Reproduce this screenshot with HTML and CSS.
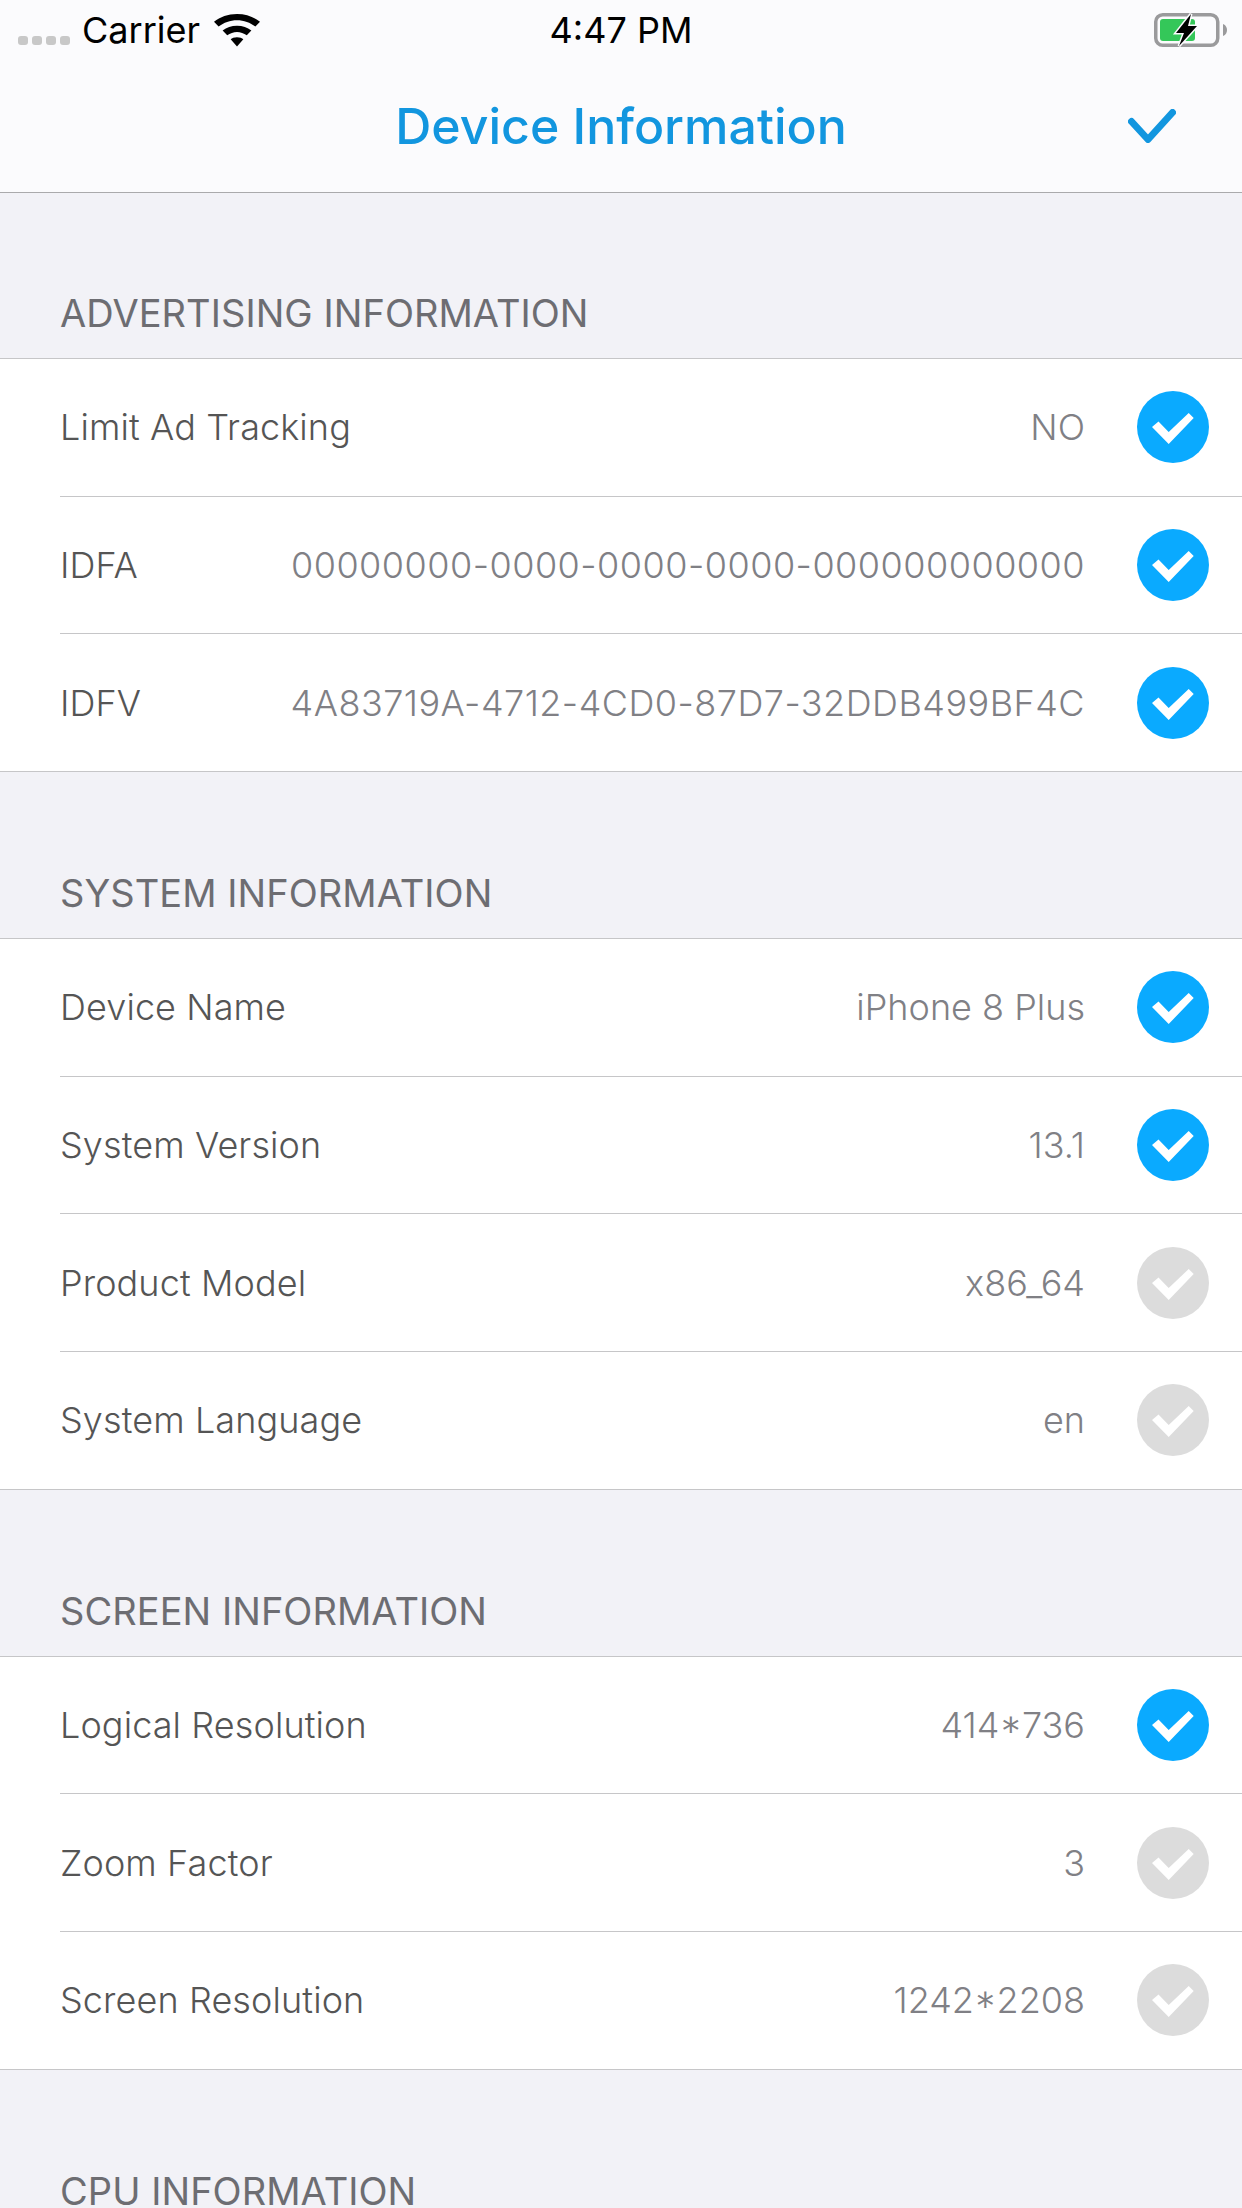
FILE: index.html
```html
<!DOCTYPE html>
<html lang="en">
<head>
    <meta charset="UTF-8">
    <meta name="viewport" content="width=device-width, initial-scale=1.0">
    <title>Device Information</title>
    <link rel="stylesheet" href="styles.css">
</head>
<body>
    <svg class="icon-defs" width="0" height="0">
        <symbol id="tick" viewBox="0 0 72 72">
            <circle cx="36" cy="36" r="36" fill="currentColor"/>
            <polygon points="15,36 21.500,30.500 31.700,41 51.700,22 56.700,27 31.700,53" fill="#fff"/>
        </symbol>
    </svg>

    <header class="top">
        <div class="status">
            <div class="status-left">
                <div class="signal"><i></i><i></i><i></i><i></i></div>
                <span class="carrier">Carrier</span>
                <svg class="wifi" viewBox="0 0 40 34" width="46" height="33" preserveAspectRatio="none">
                    <path d="M20 0 C28 0 34.500 3 40 8 L36 13 C31.500 9 26 6.500 20 6.500 C14 6.500 8.500 9 4 13 L0 8 C5.500 3 12 0 20 0 Z"/>
                    <path d="M20 12 C25 12 29 13.800 32.500 17 L28.500 22 C26 19.800 23 18.500 20 18.500 C17 18.500 14 19.800 11.500 22 L7.500 17 C11 13.800 15 12 20 12 Z"/>
                    <path d="M20 24 C22.500 24 24.300 24.800 25.500 26 L20 33.500 L14.500 26 C15.700 24.800 17.500 24 20 24 Z"/>
                </svg>
            </div>
            <span class="time">4:47 PM</span>
            <div class="status-right">
                <svg class="battery" viewBox="0 0 73 34" width="73" height="34">
                    <rect x="1.750" y="1.750" width="62" height="30.500" rx="7" fill="none" stroke="#9a9a9c" stroke-width="3.500"/>
                    <rect x="6" y="6" width="35" height="22" rx="3" fill="#34c759"/>
                    <path d="M69 11 C72 12 73 15 73 17 C73 19 72 22 69 23 Z" fill="#9a9a9c"/>
                    <path class="bolt" d="M37 1 L22 20 L30 20 L25 33 L43 13 L34 13 Z"/>
                </svg>
            </div>
        </div>
        <div class="nav">
            <h1>Device Information</h1>
            <svg class="done" viewBox="0 0 48 34" width="48" height="34">
                <path d="M3.500 12.500 L20 30.500 L44.500 3.500" fill="none" stroke="#1296df" stroke-width="7" stroke-linecap="round" stroke-linejoin="round"/>
            </svg>
        </div>
    </header>

    <main>
        <h2>ADVERTISING INFORMATION</h2>
        <section class="group">
            <div class="row"><span class="name">Limit Ad Tracking</span><span class="value">NO</span><svg class="check on"><use href="#tick"/></svg></div>
            <div class="row"><span class="name">IDFA</span><span class="value uuid">00000000-0000-0000-0000-000000000000</span><svg class="check on"><use href="#tick"/></svg></div>
            <div class="row"><span class="name">IDFV</span><span class="value uuid">4A83719A-4712-4CD0-87D7-32DDB499BF4C</span><svg class="check on"><use href="#tick"/></svg></div>
        </section>

        <h2>SYSTEM INFORMATION</h2>
        <section class="group">
            <div class="row"><span class="name">Device Name</span><span class="value">iPhone 8 Plus</span><svg class="check on"><use href="#tick"/></svg></div>
            <div class="row"><span class="name">System Version</span><span class="value">13.1</span><svg class="check on"><use href="#tick"/></svg></div>
            <div class="row"><span class="name">Product Model</span><span class="value">x86_64</span><svg class="check"><use href="#tick"/></svg></div>
            <div class="row"><span class="name">System Language</span><span class="value">en</span><svg class="check"><use href="#tick"/></svg></div>
        </section>

        <h2>SCREEN INFORMATION</h2>
        <section class="group">
            <div class="row"><span class="name">Logical Resolution</span><span class="value">414*736</span><svg class="check on"><use href="#tick"/></svg></div>
            <div class="row"><span class="name">Zoom Factor</span><span class="value">3</span><svg class="check"><use href="#tick"/></svg></div>
            <div class="row"><span class="name">Screen Resolution</span><span class="value">1242*2208</span><svg class="check"><use href="#tick"/></svg></div>
        </section>

        <h2>CPU INFORMATION</h2>
    </main>
</body>
</html>
```

FILE: styles.css
```css
html, body {
    margin: 0;
    height: 2208px;
    overflow: hidden;
}
body {
    background: #f2f2f7;
    font-family: Inter, "Noto Sans", sans-serif;
}
.icon-defs {
    display: block;
    height: 0;
}
.top {
    height: 192px;
    background: #fbfbfd;
    border-bottom: 1px solid #aaaaac;
    display: flex;
    flex-direction: column;
}
.status {
    height: 60px;
    display: grid;
    grid-template-columns: 1fr auto 1fr;
    align-items: center;
    padding: 0 15px;
}
.status-left {
    display: flex;
    align-items: center;
}
.signal {
    display: flex;
    gap: 4px;
    margin: 20px 12px 0 3px;
}
.signal i {
    width: 10px;
    height: 9px;
    border-radius: 3px;
    background: #c8c8c8;
}
.carrier, .time {
    font-size: 36px;
    color: #000;
}
.wifi {
    margin-left: 14px;
    fill: #000;
}
.status-right {
    display: flex;
    justify-content: flex-end;
}
.bolt {
    fill: #000;
    stroke: #fbfbfd;
    stroke-width: 3;
    paint-order: stroke;
}
.nav {
    flex: 1;
    display: grid;
    grid-template-columns: 1fr auto 1fr;
    align-items: center;
    padding: 0 66px;
}
.nav h1 {
    grid-column: 2;
    margin: 0;
    font-size: 50px;
    font-weight: 500;
    color: #1296df;
}
.done {
    justify-self: end;
}
main {
    margin-top: -1px;
}
main h2 {
    margin: 0;
    height: 167px;
    box-sizing: border-box;
    display: flex;
    align-items: flex-end;
    padding: 0 60px 25px;
    border-bottom: 1px solid #c6c6c8;
    font-size: 38px;
    line-height: 40px;
    font-weight: 400;
    letter-spacing: 0.05px;
    color: #6d6d72;
}
.group {
    background: #fff;
    padding-left: 60px;
}
.row {
    height: 137.670px;
    box-sizing: border-box;
    display: flex;
    align-items: center;
    padding-right: 33px;
    border-bottom: 1px solid #c6c6c8;
    font-size: 36px;
    font-weight: 300;
}
/* last separator runs the full width */
.row:last-child {
    margin-left: -60px;
    padding-left: 60px;
}
.name {
    color: #555;
    flex: 1;
    letter-spacing: 0.1px;
}
.value {
    color: #808085;
    margin-right: 52px;
}
.uuid {
    letter-spacing: 0.48px;
}
.check {
    width: 72px;
    height: 72px;
    color: #dcdcdc;
}
.check.on {
    color: #0aaaff;
}
```
